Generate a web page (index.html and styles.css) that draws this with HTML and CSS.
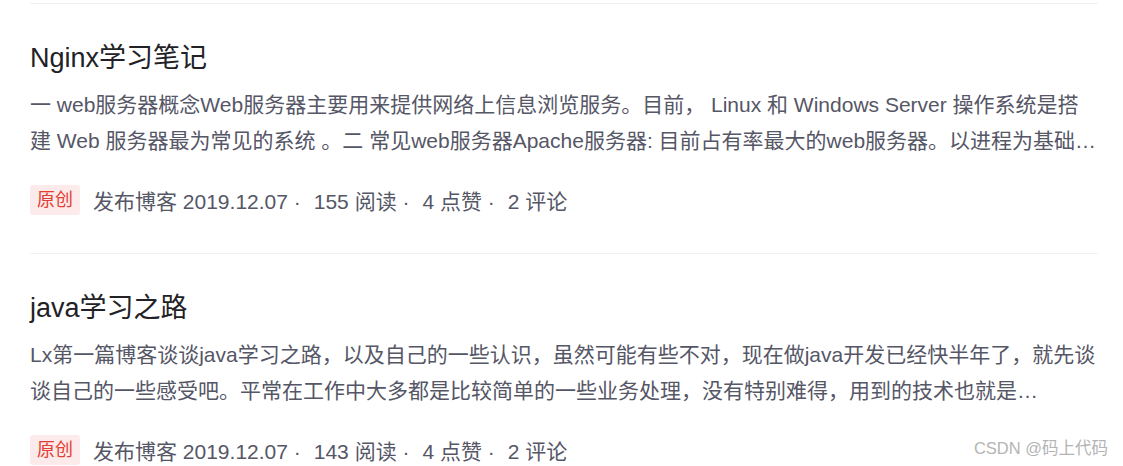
FILE: index.html
```html
<!DOCTYPE html>
<html lang="zh-CN">
<head>
    <meta charset="UTF-8">
    <meta name="viewport" content="width=device-width, initial-scale=1.0">
    <title>文章列表</title>
    <link rel="stylesheet" href="styles.css">
</head>
<body>
    <main class="article-list">
        <div class="article-item">
            <h4 class="article-title">Nginx学习笔记</h4>
            <p class="article-desc">一 web服务器概念Web服务器主要用来提供网络上信息浏览服务。目前， Linux 和 Windows Server 操作系统是搭建 Web 服务器最为常见的系统 。二 常见web服务器Apache服务器: 目前占有率最大的web服务器。以进程为基础…</p>
            <div class="article-info">
                <span class="article-type">原创</span>
                <span class="info-item">发布博客 2019.12.07 ·</span>
                <span class="info-item">155 阅读 ·</span>
                <span class="info-item">4 点赞 ·</span>
                <span class="info-item">2 评论</span>
            </div>
        </div>
        <div class="article-item">
            <h4 class="article-title">java学习之路</h4>
            <p class="article-desc">Lx第一篇博客谈谈java学习之路，以及自己的一些认识，虽然可能有些不对，现在做java开发已经快半年了，就先谈谈自己的一些感受吧。平常在工作中大多都是比较简单的一些业务处理，没有特别难得，用到的技术也就是…</p>
            <div class="article-info">
                <span class="article-type">原创</span>
                <span class="info-item">发布博客 2019.12.07 ·</span>
                <span class="info-item">143 阅读 ·</span>
                <span class="info-item">4 点赞 ·</span>
                <span class="info-item">2 评论</span>
            </div>
        </div>
    </main>
    <div class="watermark">CSDN @码上代码</div>
</body>
</html>
```
FILE: styles.css
```css
*{
    padding: 0;
    margin: 0;
    box-sizing: border-box;
}
body{
    font-family: "Liberation Sans", Arial, "Noto Sans CJK SC", sans-serif;
    background: #fff;
    overflow: hidden;
}
.article-list{
    margin: 3px 25px 0 30px;
}
.article-item{
    border-top: 1px solid #f0f0f2;
    padding: 36px 0 38px;
}
.article-title{
    font-size: 27px;
    line-height: 36px;
    font-weight: normal;
    color: #222226;
}
.article-desc{
    margin-top: 11px;
    font-size: 21px;
    line-height: 36px;
    color: #555666;
    display: -webkit-box;
    -webkit-box-orient: vertical;
    -webkit-line-clamp: 2;
    overflow: hidden;
}
.article-info{
    margin-top: 26px;
    height: 30px;
    display: flex;
    align-items: center;
    font-size: 21px;
    color: #555666;
    white-space: nowrap;
}
.article-type{
    height: 30px;
    line-height: 30px;
    padding: 0 7px;
    margin-right: 13px;
    font-size: 18px;
    color: #e33e33;
    background: rgba(227, 62, 51, 0.1);
    border-radius: 3px;
}
.info-item{
    margin-right: 13px;
}
.watermark{
    position: absolute;
    right: 15px;
    bottom: 8px;
    font-size: 16.5px;
    line-height: 20px;
    color: #b4b4b4;
    text-shadow: 0 0 1px #fff;
}
```
